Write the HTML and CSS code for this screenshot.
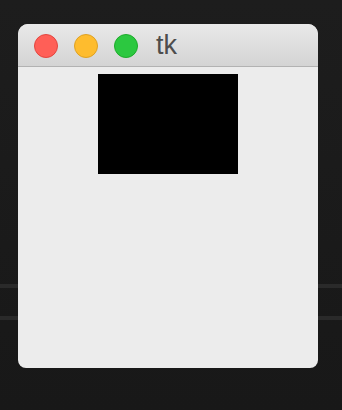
FILE: index.html
```html
<!DOCTYPE html>
<html>
<head>
<meta charset="utf-8">
<link rel="stylesheet" href="styles.css">
</head>
<body>
<div class="window">
  <div class="titlebar">
    <span class="btn close"></span>
    <span class="btn min"></span>
    <span class="btn max"></span>
    <span class="title">tk</span>
  </div>
  <div class="content">
    <div class="canvas"></div>
  </div>
</div>
</body>
</html>
```
FILE: styles.css
```css
html, body {
  margin: 0;
  padding: 0;
}
body {
  width: 342px;
  height: 410px;
  overflow: hidden;
  background:
    linear-gradient(to bottom,
      transparent 0, transparent 284px,
      #2a2a2a 284px, #2a2a2a 288px,
      transparent 288px, transparent 316px,
      #2a2a2a 316px, #2a2a2a 320px,
      transparent 320px),
    linear-gradient(to bottom, #1d1d1d 0%, #181818 100%);
  font-family: "Liberation Sans", Arial, sans-serif;
  padding-top: 24px;
  box-sizing: border-box;
}
.window {
  margin-left: 18px;
  width: 300px;
  height: 344px;
  background: #ececec;
  border-radius: 10px 10px 8px 8px;
  overflow: hidden;
  display: flex;
  flex-direction: column;
}
.titlebar {
  height: 43px;
  box-sizing: border-box;
  padding: 1px 0 0 16px;
  display: flex;
  align-items: center;
  gap: 16px;
  background: linear-gradient(to bottom, #e9e9e9, #d4d4d4);
  border-bottom: 1px solid #b2b2b2;
  flex-shrink: 0;
}
.btn {
  width: 24px;
  height: 24px;
  border-radius: 50%;
  box-sizing: border-box;
}
.close { background: #ff5f57; border: 1px solid #e2463f; }
.min { background: #febc2e; border: 1px solid #dea123; }
.max { background: #2cc840; border: 1px solid #1eab2b; }
.title {
  margin-left: 2px;
  font-size: 27px;
  color: #4d4d4d;
  line-height: 1;
}
.content {
  flex: 1;
  display: flex;
  justify-content: center;
  align-items: flex-start;
  padding-top: 7px;
}
.canvas {
  width: 140px;
  height: 100px;
  background: #000;
}
```
